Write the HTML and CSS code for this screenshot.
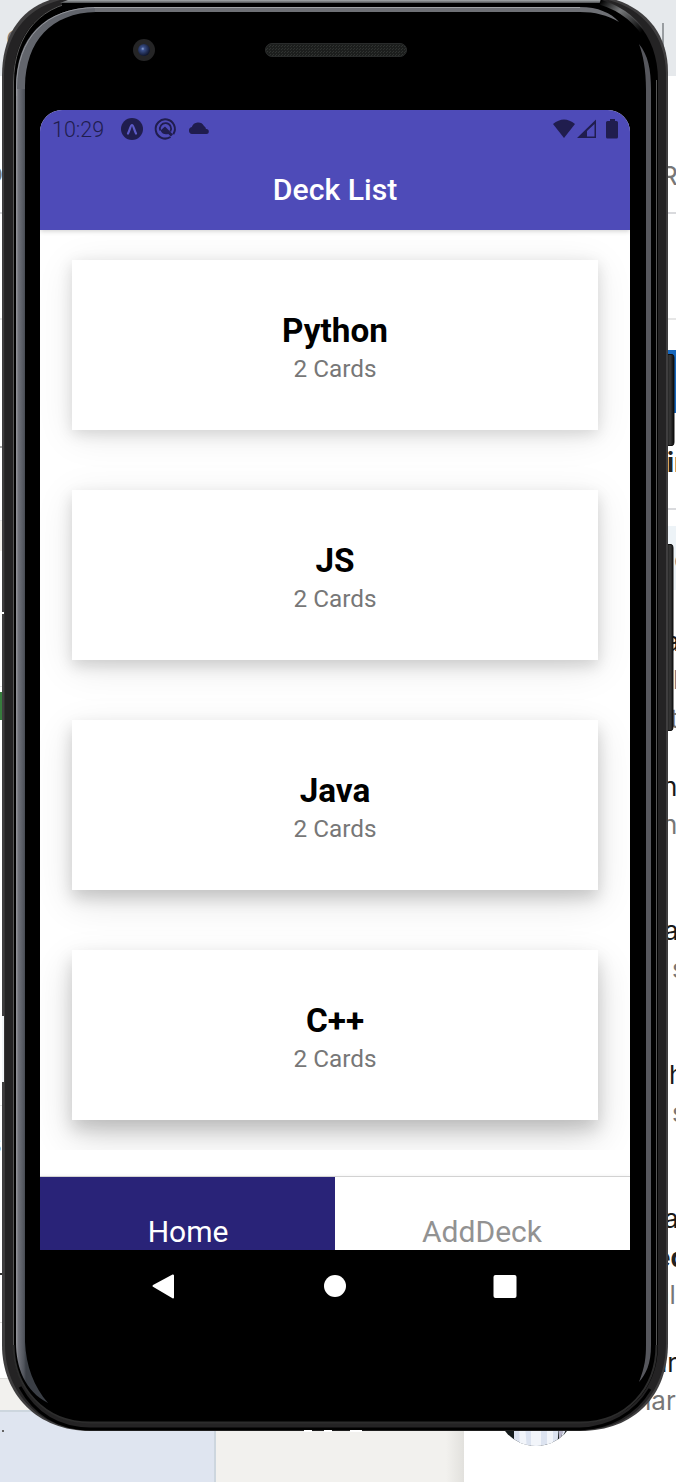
FILE: index.html
```html
<!DOCTYPE html>
<html lang="en">
<head>
<meta charset="utf-8">
<title>Deck List</title>
<link rel="stylesheet" href="styles.css">
</head>
<body>
<div class="desktop">
  <svg class="backdrop" width="676" height="1482" viewBox="0 0 676 1482">
    <defs>
      <linearGradient id="edge" x1="0" x2="1"><stop offset="0" stop-color="#f2f1ee"/><stop offset="1" stop-color="#e2e1dd"/></linearGradient>
      <clipPath id="face"><circle cx="536" cy="1406" r="40"/></clipPath>
    </defs>
    <path fill="#e6e9ec" d="M0 0h676v76H0z"/>
    <path fill="#999da1" d="M662 23h2v40h-2z"/>
    <path fill="#d9dadd" d="M0 212h3v2H0zM660 212h16v2h-16zM660 508h16v2h-16z"/>
    <path fill="#e6e6e6" d="M0 318h3v2H0zM660 318h16v2h-16zM0 520h3v1H0zM0 686h3v1H0zM0 1105h3v1H0z"/>
    <path fill="#aaa" d="M0 446h3v2H0z"/>
    <path fill="#f3f1ec" d="M0 521h3v30H0z"/>
    <path fill="#367c3d" d="M0 692h3v28H0z"/>
    <path fill="#1667bd" d="M660 350h16v63h-16z"/>
    <path fill="#edf3f7" d="M660 526h16v64h-16z"/>
    <path fill="#f2f1ee" d="M0 1378h464v104H0z"/>
    <path fill="#dedddb" d="M0 1322h4v1H0zM0 1378h20v1H0z"/>
    <path fill="#333" d="M0 1273h2v2H0z"/>
    <path fill="url(#edge)" d="M446 1400h18v82h-18z"/>
    <path fill="#cdd6de" d="M0 1410h216v72H0z"/>
    <path fill="#dfe5f0" d="M0 1412h214v70H0z"/>
    <path fill="#666" d="M2 1430h2v2H2z"/>
    <g clip-path="url(#face)">
      <path fill="#141a1b" d="M495 1370h80v80h-80z"/>
      <path fill="#dce3f0" d="M514 1425h45l-2 25h-43z"/>
      <path fill="#f2f5fa" d="M519 1425h6l2 25h-7zM531 1427h10v20h-10zM547 1425h6v22h-6z"/>
      <path fill="#b9b6cb" d="M559 1425h6l-6 18z"/>
      <path fill="#dfe3f0" d="M564 1425h4l-8 18z"/>
    </g>
    <g class="snip">
      <text x="6" y="49">G</text><text x="-13" y="182">p</text>
      <text x="-12" y="1153">s</text><text x="661" y="185">R</text>
      <text x="674" y="569">c</text><text x="673" y="689">l</text><text x="670" y="728">t</text>
      <text x="662" y="834">n</text><text x="672" y="978">s</text><text x="672" y="1122">s</text>
      <text x="655" y="1304">al</text><text x="636" y="1410">har</text>
    </g>
    <g class="snip dark">
      <text x="665" y="651">a</text><text x="662" y="796">n</text><text x="664" y="940">a</text>
      <text x="669" y="1084">h</text><text x="664" y="1228">a</text><text x="661" y="1372">ir</text>
    </g>
    <g class="snip strong"><text x="667" y="472">in</text><text x="655" y="1267">ed</text></g>
  </svg>

  <main class="phone">
    <svg class="shell" width="676" height="1482" viewBox="0 0 676 1482">
      <defs>
        <linearGradient id="shine" gradientUnits="userSpaceOnUse" x1="16" y1="0" x2="26" y2="0"><stop offset="0" stop-color="#96979d"/><stop offset=".25" stop-color="#6f7179"/><stop offset=".8" stop-color="#50545c"/><stop offset="1" stop-color="#3a3e45"/></linearGradient>
        <linearGradient id="topshine" x1="0" x2="0" y1="0" y2="1"><stop offset="0" stop-color="#a7abad"/><stop offset="1" stop-color="#4c4e50"/></linearGradient>
        <linearGradient id="key" x1="0" x2="1"><stop offset="0" stop-color="#111"/><stop offset=".5" stop-color="#393939"/><stop offset="1" stop-color="#090909"/></linearGradient>
        <radialGradient id="lens" cx=".4" cy=".4" r=".6"><stop offset="0" stop-color="#8fa5d6"/><stop offset=".25" stop-color="#3a4f88"/><stop offset="1" stop-color="#10172f"/></radialGradient>
        <linearGradient id="corner" gradientUnits="userSpaceOnUse" x1="602" y1="0" x2="640" y2="34"><stop offset="0" stop-color="#000"/><stop offset=".4" stop-color="#77797b"/><stop offset="1" stop-color="#77797b" stop-opacity="0"/></linearGradient>
        <pattern id="mesh" width="3" height="3" patternUnits="userSpaceOnUse"><path fill="#1c1e1d" d="M0 0h3v3H0z"/><path fill="#303331" d="M0 0h1v1H0zM2 1h1v1H2z"/></pattern>
      </defs>
      <path fill="url(#key)" stroke="#111" d="M666 354.500h6q2 0 2 3v85q0 3-2 3h-6zM666 544.500h5q2 0 2 3v180q0 3-2 3h-5z"/>
      <path fill="#3f3e3f" d="M2 76C2 28 28-3 78-5H588C635-3 668 26 668 72V1343C668 1395 635 1431 580 1431H90C38 1431 2 1395 2 1345Z"/>
      <path fill="#242324" d="M4 78C4 30 32-1 82-3H586C633-2 666 29 666 74V1343C666 1393 633 1430 580 1430H90C40 1430 5 1393 5 1345Z"/>
      <path fill="#000" d="M13 82C13 33 42 1 90 1H585C628 1 658 34 658 80V1345C658 1389 628 1423 580 1423H90C44 1423 13 1389 13 1345Z"/>
      <path fill="none" stroke="#565656" d="M13.500 1345V82C14 34 42 1 90 .8M656.500 80V1345"/>
      <path fill="none" stroke="#2c2c2c" stroke-width="2" d="M13.500 1345C14 1388 44 1422.500 90 1422.500H580C627 1422.500 656.500 1388 656.500 1345"/>
      <path fill="none" stroke="#000" stroke-width="3" d="M20 1387C35 1414 58 1428.500 90 1429H580C609 1428 635 1414 650 1389"/>
      <path fill="url(#topshine)" d="M68 0H600L608 3H60z"/>
      <path fill="none" stroke="url(#corner)" stroke-width="5" d="M600 2C620 8 638 21 649 42"/>
      <path fill="#000" d="M62 3H600v3H62z"/>
      <path fill="url(#shine)" d="M16 1342V88H25V1342C26 1366 34 1387 48 1403C25 1391 16 1368 16 1342Z"/>
      <path fill="#62656c" d="M16 89V88C16 37 44 8 96 7V12C51 13 26 41 25 86V89Z"/>
      <path fill="none" stroke="#94969c" d="M16.500 96V88C17 38 45 8 96 7.500"/>
      <path fill="#6e7075" d="M95 7H580C598 7 611 13 619 22C607 15 595 12 580 12H95z"/>
      <path fill="none" stroke="#a0a2a5" d="M94 7.500H580"/>
      <path fill="#56575d" d="M639 44C648 55 651 69 651 90V1345C651 1364 646 1374 639 1382C645 1367 646 1357 646 1345V90C646 69 643 55 639 44Z"/>
      <path fill="#fff" d="M2 612h2v2H2zM304 1430h8v2h-8zM324 1430h8v2h-8zM350 1430h12v2h-12z"/>
      <path fill="#f2f5f7" d="M2 1016h2v66H2z"/>
      <circle cx="144" cy="50" r="11" fill="#252526"/><circle cx="144" cy="50" r="6" fill="url(#lens)"/>
      <rect x="265.500" y="43.500" width="141" height="13" rx="6.500" fill="url(#mesh)" stroke="#292b2b"/>
    </svg>

    <section class="screen">
      <header class="top">
        <div class="status">
          <span class="clock">10:29</span>
          <svg class="notices" width="92" height="24" viewBox="0 0 92 24" fill="#201d4e">
            <circle cx="12" cy="12" r="11"/>
            <path fill="none" stroke="#5d5ac6" stroke-width="2.200" stroke-linecap="round" stroke-linejoin="round" d="M8 16.500C10 13 10.500 8 12 8S14 13 16 16.500"/>
            <path fill="none" stroke="#201d4e" stroke-width="2" d="M53.300 17.200A9.600 9.600 0 1 0 50.500 20"/>
            <path fill="none" stroke="#201d4e" stroke-width="1.800" d="M40.200 13.500A5.600 5.600 0 1 1 50.300 14.500"/>
            <path d="M40.500 13.500L45 9.500 53 17.500 50.800 19.500 48.300 17Q43 18.500 40.500 13.500z"/>
            <path d="M72 17a3.500 3.500 0 0 1-.2-6.900A6.700 6.700 0 0 1 84 9a4 4 0 0 1 2 3h.3a2.500 2.500 0 0 1 0 5z"/>
          </svg>
          <svg class="signals" width="68" height="24" viewBox="0 0 68 24" fill="#201d4e">
            <path d="M1 7Q12-2 23 7L12 21z"/>
            <path fill-rule="evenodd" d="M25 21L44 2.500V21zM35 19.500h7.500V7L35 14z"/>
            <path d="M58 2h5v2h1.500q1.500 0 1.500 1.500V20q0 1.500-1.500 1.500h-9q-1.500 0-1.500-1.500V5.500Q54 4 55.500 4H58z"/>
          </svg>
        </div>
        <h1 class="title">Deck List</h1>
      </header>
      <div class="list">
        <article class="card lift1"><h2 class="name">Python</h2><p class="count">2 Cards</p></article>
        <article class="card lift2"><h2 class="name">JS</h2><p class="count">2 Cards</p></article>
        <article class="card lift3"><h2 class="name">Java</h2><p class="count">2 Cards</p></article>
        <article class="card lift4"><h2 class="name">C++</h2><p class="count">2 Cards</p></article>
      </div>
      <nav class="tabs"><a class="tab active">Home</a><a class="tab">AddDeck</a></nav>
      <div class="keys">
        <svg width="590" height="72" viewBox="0 0 590 72" fill="#fff">
          <path stroke="#fff" stroke-width="2" stroke-linejoin="round" d="M113.500 36L133 25.500V47.500z"/>
          <circle cx="295" cy="36" r="11"/>
          <rect x="453.500" y="25" width="23" height="23" rx="2"/>
        </svg>
      </div>
    </section>
  </main>
</div>
</body>
</html>
```
FILE: styles.css
```css
body {
  margin: 0;
  font-family: Roboto, "Liberation Sans", sans-serif;
}

.desktop {
  position: relative;
  width: 676px;
  height: 1482px;
  overflow: hidden;
  background: #fff;
}

.backdrop,
.shell {
  position: absolute;
  top: 0;
  left: 0;
}

.snip {
  font: 26px Inter, sans-serif;
  fill: #777;
}

.dark {
  fill: #191919;
}

.strong {
  font-weight: 700;
  fill: #222;
}

.phone {
  position: relative;
  box-sizing: border-box;
  height: 1482px;
  padding: 110px 46px 0 40px;
}

.screen {
  position: relative;
  display: flex;
  flex-direction: column;
  width: 590px;
  height: 1212px;
  overflow: hidden;
  border-radius: 22px 22px 0 0;
  background: #fff;
}

.top {
  position: relative;
  z-index: 1;
  flex: 0 0 120px;
  background: #4e4bb8;
  box-shadow: 0 1px 5px rgba(0, 0, 0, .2);
}

.status {
  display: flex;
  align-items: center;
  height: 36px;
  padding: 0 10px 0 12px;
  color: #201d4e;
}

.clock {
  width: 68px;
  padding-top: 2px;
  font-size: 21.500px;
  font-weight: 300;
}

.notices,
.signals {
  position: relative;
  top: 1px;
}

.signals {
  margin-left: auto;
}

.title {
  margin: 26px 0 0;
  color: #fff;
  font-size: 30.200px;
  font-weight: 500;
  line-height: 36px;
  text-align: center;
}

.list {
  display: flex;
  flex-direction: column;
  gap: 59.900px;
  box-sizing: border-box;
  flex: 0 0 920px;
  padding: 30px 32px 0;
  overflow: hidden;
}

.card {
  box-sizing: border-box;
  flex: 0 0 170.200px;
  padding-top: 50px;
  background: #fff;
  text-align: center;
}

.lift1 {
  box-shadow: 0 4px 14px rgba(0, 0, 0, .13), 0 6px 36px rgba(0, 0, 0, .09);
}

.lift2 {
  box-shadow: 0 6px 14px rgba(0, 0, 0, .14), 0 8px 36px rgba(0, 0, 0, .1);
}

.lift3 {
  box-shadow: 0 8px 15px rgba(0, 0, 0, .16), 0 12px 36px rgba(0, 0, 0, .12);
}

.lift4 {
  box-shadow: 0 9px 16px rgba(0, 0, 0, .15), 0 16px 36px rgba(0, 0, 0, .16);
}

.name {
  margin: 0;
  font-size: 33.300px;
  font-weight: 700;
  line-height: 42px;
}

.count {
  margin: 0;
  color: #777;
  font-size: 24.300px;
  line-height: 34px;
}

.tabs {
  display: flex;
  box-sizing: border-box;
  flex: 0 0 74px;
  margin-top: 26px;
  border-top: 1px solid #d2d2d2;
  box-shadow: 0 -1px 3px rgba(0, 0, 0, .04);
}

.tab {
  flex: 1;
  padding-top: 36px;
  color: #929292;
  font-size: 30px;
  line-height: 37px;
  text-align: center;
}

.active {
  padding-left: 1px;
  background: #292378;
  color: #fff;
}

.tab:last-child {
  padding-right: 1px;
}

.keys {
  flex: 0 0 72px;
  background: #000;
}
```
